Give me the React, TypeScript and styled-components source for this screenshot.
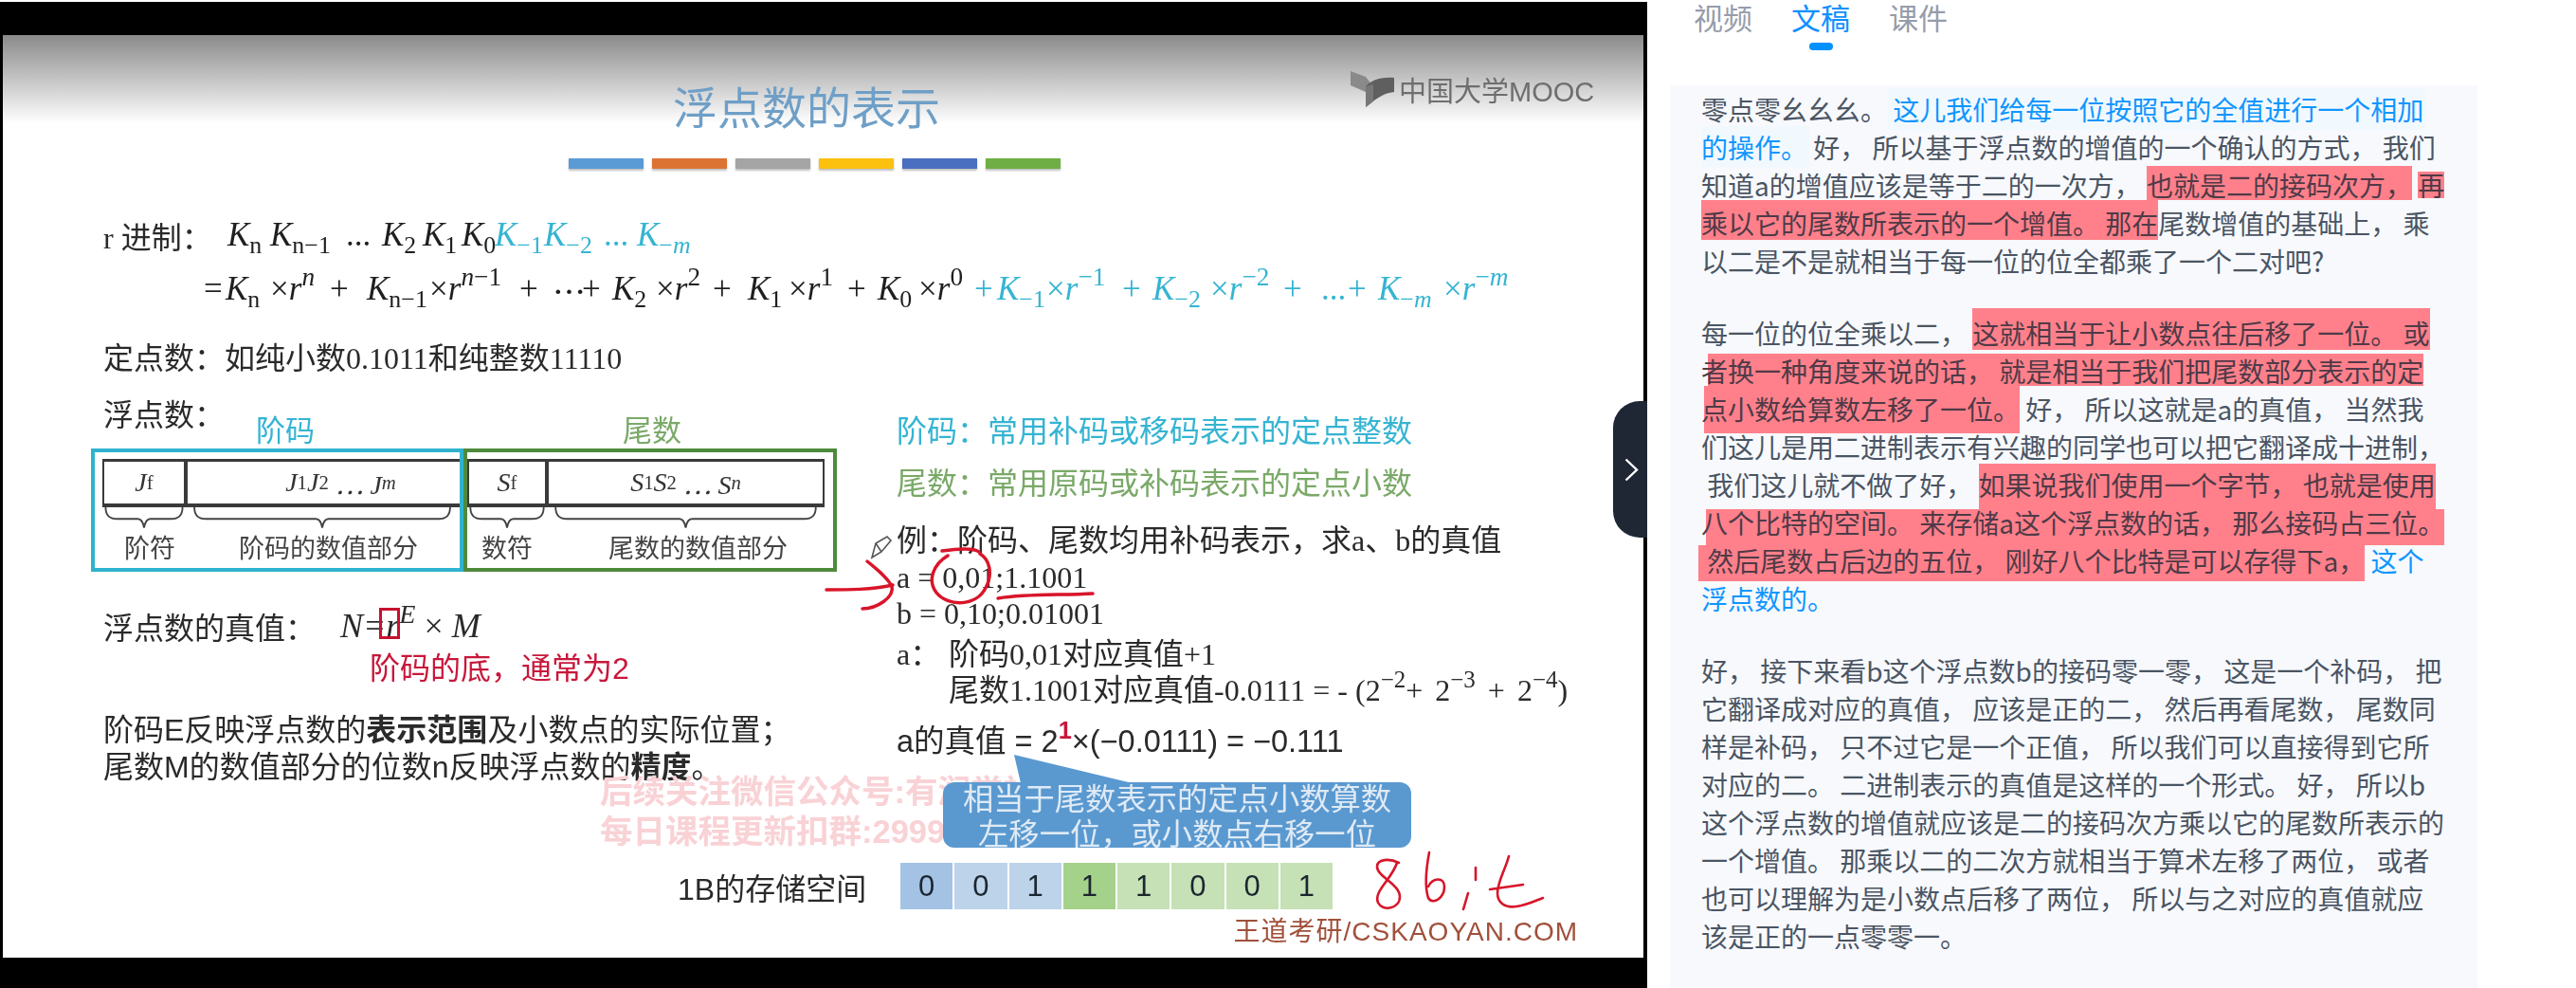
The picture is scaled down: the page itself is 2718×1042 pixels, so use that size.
import type { ReactNode } from 'react';
import styled, { createGlobalStyle } from 'styled-components';

const GlobalStyle = createGlobalStyle`
  html, body {
    margin: 0;
    padding: 0;
    background: #fff;
    overflow: hidden;
  }
`;

const SLIDE_FONT = `"Liberation Serif", "Noto Sans CJK SC", serif`;
const SANS_FONT = `"Liberation Sans", "Noto Sans CJK SC", sans-serif`;

const Page = styled.div`
  display: flex;
  width: 2718px;
  height: 1042px;
  overflow: hidden;
  font-family: "Noto Sans CJK SC", sans-serif;
`;

const VideoPane = styled.div`
  position: relative;
  flex: none;
  box-sizing: border-box;
  width: 1738px;
  height: 1040px;
  margin-top: 2px;
  padding: 35px 4px 0 3px;
  background: #000;
`;

const Slide = styled.div`
  position: relative;
  height: 973px;
  display: flex;
  flex-direction: column;
  overflow: hidden;
  background: linear-gradient(#8a8a8a 0, #ffffff 93px);
  color: #2a2a2a;
  font-family: ${SLIDE_FONT};
  font-size: 32px;
  filter: blur(0.6px);
`;

const Title = styled.div`
  margin: 48px 0 0 707px;
  height: 60px;
  line-height: 60px;
  font-size: 47px;
  color: #6f9fc6;
`;

const Bars = styled.div`
  display: flex;
  gap: 9px;
  margin: 22px 0 0 597px;
`;

const Bar = styled.div<{ $color: string }>`
  width: 79px;
  height: 11px;
  background: ${(p) => p.$color};
  box-shadow: 0 2px 2px rgba(0, 0, 0, 0.25);
`;

const FormulaRow = styled.div<{ $top: number; $left: number }>`
  display: flex;
  align-items: center;
  height: 44px;
  margin: ${(p) => p.$top}px 0 0 ${(p) => p.$left}px;
  white-space: pre;
`;

const RowLabel = styled.span`
  flex: none;
  width: 131px;
`;

const Term = styled.span<{ $w: number; $blue?: boolean }>`
  flex: none;
  width: ${(p) => p.$w}px;
  font-size: 35px;
  font-style: italic;
  white-space: pre;
  color: ${(p) => (p.$blue ? '#35b4d2' : '#1f1f1f')};
`;

const Sub = styled.sub`
  font-size: 0.74em;
  font-style: normal;
  line-height: 0;
  vertical-align: -0.3em;
`;

const Sup = styled.sup`
  font-size: 0.78em;
  line-height: 0;
  vertical-align: 0.55em;
`;

const Plain = styled.span`
  font-style: normal;
`;

const Italic = styled.span`
  font-style: italic;
`;

const Lower = styled.div`
  display: grid;
  grid-template-columns: 850px 1fr;
  margin: 19px 0 0 93px;
`;

const LeftCol = styled.div`
  display: flex;
  flex-direction: column;
`;

const HeadRow = styled.div`
  display: flex;
  height: 57px;
`;

const FloatLabel = styled.div`
  width: 161px;
  margin-left: 13px;
  line-height: 44px;
`;

const PartLabel = styled.div<{ $color: string; $gap: number }>`
  margin: 17px 0 0 ${(p) => p.$gap}px;
  line-height: 44px;
  font-size: 31px;
  color: ${(p) => p.$color};
`;

const FormatBox = styled.div`
  display: flex;
  height: 130px;
`;

const Frame = styled.div<{ $color: string; $pad: number; $width: number }>`
  box-sizing: border-box;
  display: flex;
  width: ${(p) => p.$width}px;
  height: 130px;
  padding: 7px 0 0 ${(p) => p.$pad}px;
  border: 4px solid ${(p) => p.$color};
`;

const Field = styled.div<{ $width: number }>`
  width: ${(p) => p.$width}px;
  display: flex;
  flex-direction: column;
  align-items: stretch;
`;

const FieldCell = styled.div<{ $open?: boolean; $shift?: number }>`
  box-sizing: border-box;
  height: 54px;
  display: flex;
  align-items: center;
  justify-content: center;
  padding-left: ${(p) => p.$shift ?? 0}px;
  border-top: 3px solid #3a3a3a;
  border-bottom: 4px solid #3a3a3a;
  border-left: 2px solid #3a3a3a;
  border-right: ${(p) => (p.$open ? '0' : '2px solid #3a3a3a')};
  font-size: 28px;
  font-style: italic;
  color: #333;
  white-space: pre;
`;

const FieldLabel = styled.div<{ $shift?: number }>`
  margin-top: 1px;
  padding-left: ${(p) => p.$shift ?? 0}px;
  line-height: 40px;
  font-size: 27px;
  color: #444;
  text-align: center;
`;

const TruthRow = styled.div`
  display: flex;
  align-items: center;
  height: 44px;
  margin: 35px 0 0 13px;
`;

const TruthLabel = styled.div`
  width: 250px;
`;

const TruthFormula = styled.div`
  position: relative;
  font-size: 36px;
  font-style: italic;
  white-space: pre;
`;

const BaseMark = styled.div`
  position: absolute;
  box-sizing: border-box;
  left: 41px;
  top: 2px;
  width: 22px;
  height: 33px;
  border: 3px solid #c8102e;
`;

const RedNote = styled.div`
  margin: 1px 0 0 294px;
  line-height: 44px;
  color: #c8173a;
  font-family: ${SANS_FONT};
`;

const Remarks = styled.div`
  margin: 24px 0 0 13px;
  line-height: 39px;
  font-size: 32px;
  font-family: ${SANS_FONT};
  white-space: pre;
`;

const Strong = styled.strong`
  font-weight: 700;
`;

const RightCol = styled.div`
  display: flex;
  flex-direction: column;
  white-space: pre;
`;

const Statement = styled.div<{ $color: string; $top: number }>`
  margin-top: ${(p) => p.$top}px;
  line-height: 44px;
  font-size: 32px;
  color: ${(p) => p.$color};
`;

const Working = styled.div<{ $top?: number; $h?: number; $indent?: number }>`
  margin-top: ${(p) => p.$top ?? 0}px;
  margin-left: ${(p) => p.$indent ?? 0}px;
  line-height: ${(p) => p.$h ?? 38}px;
  height: ${(p) => p.$h ?? 38}px;
`;

const WorkingHead = styled.span`
  display: inline-block;
  width: 55px;
`;

const PowerRun = styled.span`
  word-spacing: 5px;
`;

const ResultLine = styled.div`
  margin-top: 15px;
  height: 40px;
  line-height: 40px;
  font-family: ${SANS_FONT};
  font-size: 32.5px;
`;

const RedDigit = styled.span`
  color: #c8173a;
  font-weight: 700;
`;

const StorageRow = styled.div`
  display: flex;
  align-items: center;
  margin: 81px 0 0 712px;
`;

const StorageLabel = styled.div`
  width: 235px;
  font-family: ${SANS_FONT};
  font-size: 32px;
`;

const Cells = styled.div`
  display: flex;
  gap: 2px;
`;

const Cell = styled.div<{ $bg: string }>`
  width: 55.25px;
  height: 49px;
  display: flex;
  align-items: center;
  justify-content: center;
  background: ${(p) => p.$bg};
  font-family: "Liberation Sans", sans-serif;
  font-size: 31px;
  color: #1c2630;
`;

const Brand = styled.div`
  margin: 5px 69px 0 0;
  line-height: 38px;
  text-align: right;
  font-family: ${SANS_FONT};
  font-size: 28px;
  letter-spacing: 1px;
  color: #a0503a;
`;

/* overlays on top of the slide */
const MoocLogo = styled.div`
  position: absolute;
  top: 36px;
  left: 1422px;
  display: flex;
  align-items: center;
  gap: 3px;
  font-family: ${SANS_FONT};
  font-size: 29px;
  color: #6e6e6e;
`;

const Watermark = styled.div`
  position: absolute;
  left: 630px;
  top: 777px;
  line-height: 42px;
  font-family: ${SANS_FONT};
  font-size: 34.5px;
  font-weight: 700;
  color: #f9d2d6;
  white-space: pre;
`;

const Callout = styled.div`
  position: absolute;
  box-sizing: border-box;
  left: 992px;
  top: 788px;
  width: 494px;
  height: 69px;
  border-radius: 12px;
  background: #5a99d0;
  color: #dfeaf5;
  font-size: 32.3px;
  line-height: 37px;
  text-align: center;
  white-space: pre;

  &::before {
    content: "";
    position: absolute;
    left: 75px;
    top: -29px;
    width: 130px;
    height: 30px;
    background: #5a99d0;
    clip-path: polygon(0 0, 5.4% 100%, 96% 100%);
  }
`;

const CalloutText = styled.span`
  position: relative;
`;

const InkLayer = styled.svg`
  position: absolute;
  inset: 0;
  width: 100%;
  height: 100%;
  pointer-events: none;
`;

const Handle = styled.div`
  position: absolute;
  left: 1702px;
  top: 421px;
  width: 36px;
  height: 144px;
  display: flex;
  align-items: center;
  padding-left: 12px;
  box-sizing: border-box;
  border-radius: 28px 0 0 28px;
  background: #1f2634;
`;

/* right side */
const Side = styled.div`
  flex: 1;
  min-width: 0;
`;

const Tabs = styled.div`
  display: flex;
  gap: 41px;
  height: 90px;
  padding-left: 49px;
`;

const Tab = styled.div<{ $active?: boolean }>`
  position: relative;
  height: 36px;
  line-height: 36px;
  font-size: 31px;
  color: ${(p) => (p.$active ? '#0f8fff' : '#969cab')};

  ${(p) =>
    p.$active &&
    `&::after {
      content: "";
      position: absolute;
      left: 19px;
      top: 45px;
      width: 25px;
      height: 8px;
      border-radius: 4px;
      background: #0091ff;
    }`}
`;

const Transcript = styled.div`
  box-sizing: border-box;
  isolation: isolate;
  width: 852px;
  height: 952px;
  margin-left: 24px;
  padding: 5px 0 0 33px;
  background: #f7f9fd;
  color: #4b5563;
  font-size: 28px;
  line-height: 40px;
`;

const Paragraph = styled.div`
  margin-bottom: 36px;
  white-space: pre;
`;

const Line = styled.div`
  height: 40px;
`;

const Active = styled.span<{ $left?: number }>`
  position: relative;
  color: #0f96ff;

  &::before {
    content: "";
    position: absolute;
    z-index: -1;
    top: -2px;
    bottom: -2px;
    left: ${(p) => p.$left ?? -5}px;
    right: -2px;
    background: #f2f9fe;
  }
`;

const Mark = styled.span<{ $top: number; $bottom: number; $left?: number; $right?: number }>`
  position: relative;
  color: #4f3a48;

  &::before {
    content: "";
    position: absolute;
    z-index: -1;
    top: ${(p) => p.$top}px;
    bottom: ${(p) => p.$bottom}px;
    left: ${(p) => p.$left ?? 0}px;
    right: ${(p) => p.$right ?? 0}px;
    background: #ff808a;
  }
`;

const Blue = styled.span`
  color: #0f96ff;
`;

const barColors = ['#5b9bd5', '#dd7333', '#a5a5a5', '#fcc00f', '#4a6fc0', '#6fae45'];

const storageCells = [
  { digit: '0', bg: '#a4c3e4' },
  { digit: '0', bg: '#bdd3ea' },
  { digit: '1', bg: '#bdd3ea' },
  { digit: '1', bg: '#a5d28b' },
  { digit: '1', bg: '#c5e1b5' },
  { digit: '0', bg: '#c5e1b5' },
  { digit: '0', bg: '#c5e1b5' },
  { digit: '1', bg: '#c5e1b5' },
];

type FormulaTerm = { w: number; blue?: boolean; body: ReactNode };

// widths act as tab stops so the terms line up with the slide
const digitsRow: FormulaTerm[] = [
  { w: 45, body: <>K<Sub>n</Sub></> },
  { w: 80, body: <>K<Sub>n−1</Sub></> },
  { w: 38, body: <Plain>...</Plain> },
  { w: 43, body: <>K<Sub>2</Sub></> },
  { w: 41, body: <>K<Sub>1</Sub></> },
  { w: 35, body: <>K<Sub>0</Sub></> },
  { w: 52, blue: true, body: <>K<Sub>−1</Sub></> },
  { w: 63, blue: true, body: <>K<Sub>−2</Sub></> },
  { w: 35, blue: true, body: <Plain>...</Plain> },
  { w: 60, blue: true, body: <>K<Sub>−<Italic>m</Italic></Sub></> },
];

const Times = ({ power }: { power: ReactNode }) => (
  <>
    <Plain>×</Plain>r<Sup>{power}</Sup>
  </>
);

const expansionRow: FormulaTerm[] = [
  { w: 23, body: <Plain>=</Plain> },
  { w: 47, body: <>K<Sub>n</Sub></> },
  { w: 63, body: <Times power="n" /> },
  { w: 39, body: <Plain>+</Plain> },
  { w: 66, body: <>K<Sub>n−1</Sub></> },
  { w: 95, body: <Times power={<>n<Plain>−1</Plain></>} /> },
  { w: 35, body: <Plain>+</Plain> },
  { w: 31, body: <Plain>⋯</Plain> },
  { w: 32, body: <Plain>+</Plain> },
  { w: 46, body: <>K<Sub>2</Sub></> },
  { w: 60, body: <Times power={<Plain>2</Plain>} /> },
  { w: 37, body: <Plain>+</Plain> },
  { w: 43, body: <>K<Sub>1</Sub></> },
  { w: 62, body: <Times power={<Plain>1</Plain>} /> },
  { w: 32, body: <Plain>+</Plain> },
  { w: 43, body: <>K<Sub>0</Sub></> },
  { w: 59, body: <Times power={<Plain>0</Plain>} /> },
  { w: 24, blue: true, body: <Plain>+</Plain> },
  { w: 52, blue: true, body: <>K<Sub>−1</Sub></> },
  { w: 80, blue: true, body: <Times power={<Plain>−1</Plain>} /> },
  { w: 32, blue: true, body: <Plain>+</Plain> },
  { w: 61, blue: true, body: <>K<Sub>−2</Sub></> },
  { w: 77, blue: true, body: <Times power={<Plain>−2</Plain>} /> },
  { w: 40, blue: true, body: <Plain>+</Plain> },
  { w: 28, blue: true, body: <Plain>...</Plain> },
  { w: 32, blue: true, body: <Plain>+</Plain> },
  { w: 69, blue: true, body: <>K<Sub>−<Italic>m</Italic></Sub></> },
  { w: 77, blue: true, body: <Times power={<><Plain>−</Plain>m</>} /> },
];

const Brace = ({ width }: { width: number }) => {
  const mid = width / 2;
  return (
    <svg width={width} height={24} viewBox={`0 0 ${width} 24`} style={{ display: 'block' }}>
      <path
        d={`M1 0 C1 10 6 13 14 13 L${mid - 7} 13 C${mid - 3} 13 ${mid - 1} 17 ${mid} 23 C${mid + 1} 17 ${mid + 3} 13 ${mid + 7} 13 L${width - 14} 13 C${width - 6} 13 ${width - 1} 10 ${width - 1} 0`}
        fill="none"
        stroke="#444"
        strokeWidth="2"
      />
    </svg>
  );
};

const App = () => {
  return (
    <Page>
      <GlobalStyle />
      <VideoPane>
        <Slide>
          <Title>浮点数的表示</Title>
          <Bars>
            {barColors.map((c) => (
              <Bar key={c} $color={c} />
            ))}
          </Bars>

          <FormulaRow $top={48} $left={106}>
            <RowLabel>r 进制：</RowLabel>
            {digitsRow.map((t, i) => (
              <Term key={i} $w={t.w} $blue={t.blue}>
                {t.body}
              </Term>
            ))}
          </FormulaRow>
          <FormulaRow $top={13} $left={212}>
            {expansionRow.map((t, i) => (
              <Term key={i} $w={t.w} $blue={t.blue}>
                {t.body}
              </Term>
            ))}
          </FormulaRow>
          <FormulaRow $top={26} $left={106}>
            定点数：如纯小数0.1011和纯整数11110
          </FormulaRow>

          <Lower>
            <LeftCol>
              <HeadRow>
                <FloatLabel>浮点数：</FloatLabel>
                <PartLabel $color="#35b4d2" $gap={0}>阶码</PartLabel>
                <PartLabel $color="#7aa968" $gap={325}>尾数</PartLabel>
              </HeadRow>
              <FormatBox>
                <Frame $color="#2fb3cf" $pad={8} $width={393}>
                  <Field $width={88}>
                    <FieldCell>
                      J<Sub>f</Sub>
                    </FieldCell>
                    <Brace width={88} />
                    <FieldLabel $shift={12}>阶符</FieldLabel>
                  </Field>
                  <Field $width={292}>
                    <FieldCell $open $shift={36}>
                      J<Sub>1</Sub>J<Sub>2</Sub> ⋯ J<Sub><Italic>m</Italic></Sub>
                    </FieldCell>
                    <Brace width={288} />
                    <FieldLabel $shift={12}>阶码的数值部分</FieldLabel>
                  </Field>
                </Frame>
                <Frame $color="#4e8a3c" $pad={0} $width={394}>
                  <Field $width={84}>
                    <FieldCell>
                      S<Sub>f</Sub>
                    </FieldCell>
                    <Brace width={84} />
                    <FieldLabel>数符</FieldLabel>
                  </Field>
                  <Field $width={293}>
                    <FieldCell>
                      S<Sub>1</Sub>S<Sub>2</Sub> ⋯ S<Sub><Italic>n</Italic></Sub>
                    </FieldCell>
                    <Brace width={293} />
                    <FieldLabel $shift={26}>尾数的数值部分</FieldLabel>
                  </Field>
                </Frame>
              </FormatBox>
              <TruthRow>
                <TruthLabel>浮点数的真值：</TruthLabel>
                <TruthFormula>
                  N=r<Sup>E</Sup> <Plain>×</Plain> M
                  <BaseMark />
                </TruthFormula>
              </TruthRow>
              <RedNote>阶码的底，通常为2</RedNote>
              <Remarks>
                阶码E反映浮点数的<Strong>表示范围</Strong>及小数点的实际位置；
                <br />
                尾数M的数值部分的位数n反映浮点数的<Strong>精度</Strong>。
              </Remarks>
            </LeftCol>

            <RightCol>
              <Statement $color="#35b4d2" $top={17}>阶码：常用补码或移码表示的定点整数</Statement>
              <Statement $color="#7aa968" $top={11}>尾数：常用原码或补码表示的定点小数</Statement>
              <Working $top={18} $h={40}>例：阶码、尾数均用补码表示，求a、b的真值</Working>
              <Working>a = 0,01;1.1001</Working>
              <Working>b = 0,10;0.01001</Working>
              <Working $top={5}>
                <WorkingHead>a：</WorkingHead>阶码0,01对应真值+1
              </Working>
              <Working $indent={55}>
                尾数1.1001对应真值-0.0111 = - (
                <PowerRun>
                  2<Sup>−2</Sup>+ 2<Sup>−3</Sup> + 2<Sup>−4</Sup>)
                </PowerRun>
              </Working>
              <ResultLine>
                a的真值 = 2<Sup><RedDigit>1</RedDigit></Sup>×(−0.0111) = −0.111
              </ResultLine>
            </RightCol>
          </Lower>

          <StorageRow>
            <StorageLabel>1B的存储空间</StorageLabel>
            <Cells>
              {storageCells.map((c, i) => (
                <Cell key={i} $bg={c.bg}>
                  {c.digit}
                </Cell>
              ))}
            </Cells>
          </StorageRow>
          <Brand>王道考研/CSKAOYAN.COM</Brand>

          <MoocLogo>
            <svg width="48" height="38" viewBox="0 0 48 38">
              <path d="M0 0 L16 6 L24 16 L24 30 L16 22 L0 15 Z" fill="#8a8a8a" />
              <path d="M16 38 L16 16 C22 10 30 6 46 7 L46 22 C34 23 26 30 16 38 Z" fill="#5f5f5f" />
              <path d="M16 16 L24 14 L24 32 L16 38 Z" fill="#777" />
            </svg>
            <span>中国大学MOOC</span>
          </MoocLogo>

          <Watermark>
            后续关注微信公众号:有润学社
            <br />
            每日课程更新扣群:29996398
          </Watermark>
          <Callout>
            <CalloutText>
              相当于尾数表示的定点小数算数
              <br />
              左移一位，或小数点右移一位
            </CalloutText>
          </Callout>

          <InkLayer viewBox="3 37 1731 973">
            <g fill="none" stroke="#d9152a" strokeWidth="3.5" strokeLinecap="round">
              <path d="M872 622 C895 622 920 622 942 617" />
              <path d="M915 592 C925 600 935 608 941 618 C944 630 925 642 910 642" />
              <path d="M994 581 C1015 578 1028 578 1033 582 M1000 586 C985 595 978 612 988 625 C1000 640 1030 640 1040 620 C1048 605 1044 590 1034 584" />
              <path d="M1053 631 C1085 626 1120 628 1153 626" />
            </g>
            <g fill="none" stroke="#d7152a" strokeWidth="2.6" strokeLinecap="round" strokeLinejoin="round">
              <path d="M1476 910 C1466 905 1453 906 1453 914 C1453 925 1477 932 1477 946 C1477 958 1459 962 1454 952 C1449 940 1468 928 1474 910" />
              <path d="M1508 899 C1505 915 1503 935 1507 947 C1512 955 1524 947 1524 935 C1524 925 1512 925 1507 935" />
              <path d="M1557 915 L1557 928 M1549 942 L1544 959" />
              <path d="M1592 903 C1588 918 1580 930 1580 942 C1580 952 1588 958 1600 956 C1610 955 1620 950 1628 947 M1572 938 L1607 933" />
            </g>
            <path
              d="M920 588 L924 573 L936 566 L940 570 L930 582 Z M924 573 L930 582"
              fill="none"
              stroke="#555"
              strokeWidth="1.6"
            />
          </InkLayer>
        </Slide>
        <Handle>
          <svg width="15" height="25" viewBox="0 0 15 25">
            <path d="M1.5 1.5 L13 12.5 L1.5 23.5" fill="none" stroke="#fff" strokeWidth="2.4" />
          </svg>
        </Handle>
      </VideoPane>

      <Side>
        <Tabs>
          <Tab>视频</Tab>
          <Tab $active>文稿</Tab>
          <Tab>课件</Tab>
        </Tabs>
        <Transcript>
          <Paragraph>
            <Line>
              零点零幺幺幺。 <Active>这儿我们给每一位按照它的全值进行一个相加</Active>
            </Line>
            <Line>
              <Active $left={0}>的操作。</Active> 好， 所以基于浮点数的增值的一个确认的方式， 我们
            </Line>
            <Line>
              知道a的增值应该是等于二的一次方， <Mark $top={0} $bottom={4}>也就是二的接码次方，</Mark> <Mark $top={6} $bottom={6}>再</Mark>
            </Line>
            <Line>
              <Mark $top={-4} $bottom={2}>乘以它的尾数所表示的一个增值。 那在</Mark>尾数增值的基础上， 乘
            </Line>
            <Line>以二是不是就相当于每一位的位全都乘了一个二对吧?</Line>
          </Paragraph>
          <Paragraph>
            <Line>
              每一位的位全乘以二， <Mark $top={-6} $bottom={2}>这就相当于让小数点往后移了一位。 或</Mark>
            </Line>
            <Line>
              <Mark $top={2} $bottom={4} $left={7}>者换一种角度来说的话， 就是相当于我们把尾数部分表示的定</Mark>
            </Line>
            <Line>
              <Mark $top={-4} $bottom={-6} $left={3}>点小数给算数左移了一位。</Mark> 好， 所以这就是a的真值， 当然我
            </Line>
            <Line>们这儿是用二进制表示有兴趣的同学也可以把它翻译成十进制，</Line>
            <Line>
              {' '}我们这儿就不做了好， <Mark $top={-2} $bottom={-6}>如果说我们使用一个字节， 也就是使用</Mark>
            </Line>
            <Line>
              <Mark $top={6} $bottom={-4} $left={5}>八个比特的空间。 来存储a这个浮点数的话， 那么接码占三位。</Mark>
            </Line>
            <Line>
              <Mark $top={4} $bottom={-2} $left={-3}> 然后尾数占后边的五位， 刚好八个比特是可以存得下a，</Mark> <Blue>这个</Blue>
            </Line>
            <Line>
              <Blue>浮点数的。</Blue>
            </Line>
          </Paragraph>
          <Paragraph>
            <Line>好， 接下来看b这个浮点数b的接码零一零， 这是一个补码， 把</Line>
            <Line>它翻译成对应的真值， 应该是正的二， 然后再看尾数， 尾数同</Line>
            <Line>样是补码， 只不过它是一个正值， 所以我们可以直接得到它所</Line>
            <Line>对应的二。 二进制表示的真值是这样的一个形式。 好， 所以b</Line>
            <Line>这个浮点数的增值就应该是二的接码次方乘以它的尾数所表示的</Line>
            <Line>一个增值。 那乘以二的二次方就相当于算术左移了两位， 或者</Line>
            <Line>也可以理解为是小数点后移了两位， 所以与之对应的真值就应</Line>
            <Line>该是正的一点零零一。</Line>
          </Paragraph>
        </Transcript>
      </Side>
    </Page>
  );
};

export default App;
